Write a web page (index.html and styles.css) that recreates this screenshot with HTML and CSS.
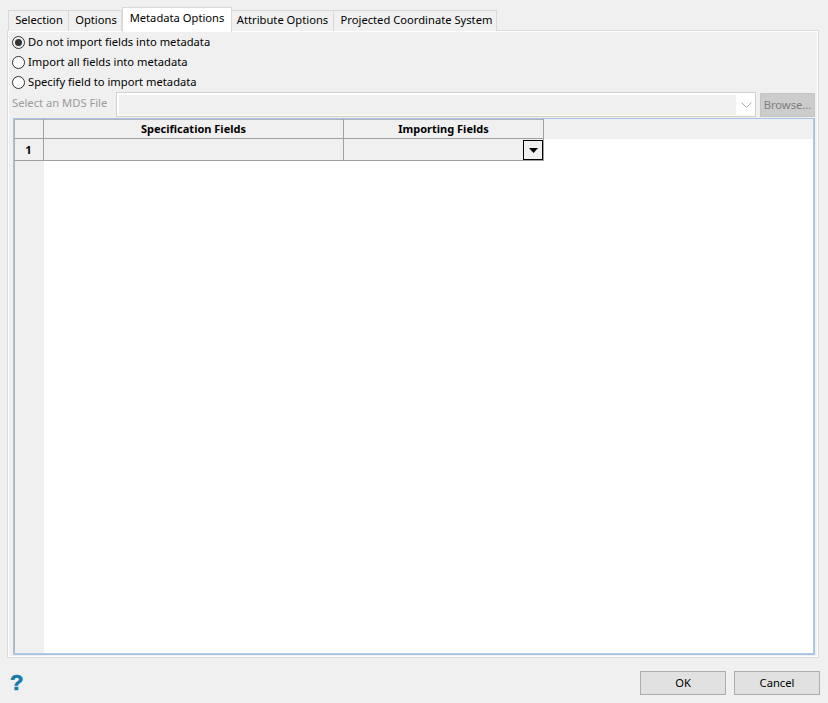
FILE: index.html
```html
<!DOCTYPE html>
<html lang="en">
<head>
<meta charset="utf-8">
<title>Metadata Options</title>
<link rel="stylesheet" href="styles.css">
</head>
<body>
<div class="dialog">
  <div class="tabs">
    <div class="tab tab-selection">Selection</div>
    <div class="tab tab-options">Options</div>
    <div class="tab tab-active">Metadata Options</div>
    <div class="tab tab-attribute">Attribute Options</div>
    <div class="tab tab-projected">Projected Coordinate System</div>
  </div>
  <div class="pane">
    <div class="radios">
      <label class="radio"><span class="dot dot-on"></span>Do not import fields into metadata</label>
      <label class="radio"><span class="dot"></span>Import all fields into metadata</label>
      <label class="radio"><span class="dot"></span>Specify field to import metadata</label>
    </div>
    <div class="file-row">
      <span class="file-label">Select an MDS File</span>
      <div class="combo">
        <div class="combo-field"></div>
        <svg class="chevron" width="11" height="6" viewBox="0 0 11 6"><path d="M0.5 0.5 L5.5 5.5 L10.5 0.5" fill="none" stroke="#a6a6a6" stroke-width="1"/></svg>
      </div>
      <div class="browse">Browse...</div>
    </div>
    <div class="table">
      <div class="side"></div>
      <div class="grid-wrap">
        <div class="grid">
          <div class="cell corner"></div>
          <div class="cell head">Specification Fields</div>
          <div class="cell head">Importing Fields</div>
          <div class="cell rownum">1</div>
          <div class="cell body"></div>
          <div class="cell body drop-cell">
            <span class="drop"><svg width="9" height="5" viewBox="0 0 9 5"><path d="M0 0 H9 L4.5 5 Z" fill="#000"/></svg></span>
          </div>
        </div>
      </div>
    </div>
  </div>
  <div class="footer">
    <span class="help">?</span>
    <div class="actions">
      <div class="btn">OK</div>
      <div class="btn">Cancel</div>
    </div>
  </div>
</div>
</body>
</html>
```
FILE: styles.css
```css
* { box-sizing: border-box; }
html, body { margin: 0; height: 100%; }
body {
  background: #f0f0f0;
  font: 11.2px/16px "Noto Sans", "Open Sans", sans-serif;
  color: #000;
  overflow: hidden;
}
.dialog { width: 828px; height: 703px; padding: 7px 8px 0 7px; display: flex; flex-direction: column; }
.tabs { display: flex; height: 24px; align-items: flex-end; padding-left: 1px; position: relative; z-index: 1; }
.tab {
  height: 21px;
  border: 1px solid #d9d9d9;
  border-bottom: 0;
  border-left: 0;
  text-align: center;
  line-height: 18px;
  white-space: nowrap;
  background: #f0f0f0;
}
.tab-selection { width: 61px; border-left: 1px solid #d9d9d9; padding-left: 1px; }
.tab-options { width: 53px; padding-left: 2px; }
.tab-active { width: 110px; background: #fff; border: 1px solid #d9d9d9; border-bottom: 0; line-height: 20px; margin-bottom: -1px; height: 25px; padding-bottom: 3px; }
.tab-attribute { width: 102px; }
.tab-projected { width: 163px; padding-left: 3px; }
.pane {
  height: 628px;
  width: 812px;
  margin-top: -1px;
  background: #f0f0f0;
  border: 1px solid #d9d9d9;
  box-shadow: inset 1px 1px 0 #fff, inset -1px -1px 0 #fff;
  padding: 1px 3px 0 4px;
  display: flex;
  flex-direction: column;
}
.radios { display: flex; flex-direction: column; }
.radio { height: 20px; display: flex; align-items: center; color: #000; }
.dot {
  width: 13px; height: 13px; border-radius: 50%;
  border: 1px solid #333; background: #fff;
  margin-right: 3px; flex: none;
  display: flex; align-items: center; justify-content: center;
}
.dot-on { background: #f0f0f0; }
.dot-on::after { content: ""; width: 7px; height: 7px; border-radius: 50%; background: #333; }
.file-row { display: flex; align-items: flex-start; height: 24px; }
.file-label { width: 104px; color: #9b9b9b; line-height: 22px; white-space: nowrap; }
.combo {
  width: 640px; height: 25px; border: 1px solid #d0d0d0;
  padding: 2px; display: flex; align-items: center;
  background: #fff;
}
.combo-field { width: 617px; height: 20px; background: #f0f0f0; }
.chevron { margin-left: 5px; }
.browse {
  width: 55px; height: 24px; margin: 1px 0 0 4px;
  background: #cccccc; border: 1px solid #c4c4c4;
  color: #7f7f7f; text-align: center; line-height: 21px;
}
.table {
  width: 802px; height: 537px; margin-top: 2px; margin-left: 1px;
  border: 1px solid #a3c2e4;
  background: #fff;
  display: flex;
  position: relative;
}
.table::after {
  content: ""; position: absolute; inset: 0; pointer-events: none;
  box-shadow: inset -1px -1px 0 #b5c9e0;
}
.side { position: absolute; left: 0; top: 0; bottom: 0; width: 30px; background: #f0f0f0; border-left: 1px solid #b4b4b4; }
.grid-wrap { width: 100%; height: 20px; background: #f0f0f0; position: relative; }
.grid {
  display: grid;
  grid-template-columns: 30px 300px 200px;
  grid-template-rows: 20px 22px;
  width: 530px;
  position: relative;
}
.cell { border-right: 1px solid #a0a0a0; border-bottom: 1px solid #a0a0a0; background: #f0f0f0; }
.corner { box-shadow: inset 1px 1px 0 #b4b4b4; }
.head { font-size: 11px; font-weight: 700; text-align: center; line-height: 20px; box-shadow: inset 0 1px 0 #b4b4b4; }
.rownum { font-weight: 700; text-align: center; line-height: 21px; box-shadow: inset 1px 0 0 #b4b4b4; }
.drop-cell { position: relative; }
.drop {
  position: absolute; right: 0; top: 1px; width: 20px; height: 20px;
  border: 1px solid #000; background: #f0f0f0;
  display: flex; align-items: center; justify-content: center;
}
.drop svg { display: block; }
.footer { flex: 1; display: flex; justify-content: space-between; align-items: flex-start; padding-top: 13px; }
.help { font: 700 22px/24px "Liberation Sans", sans-serif; color: #1279a8; padding-left: 3px; -webkit-text-stroke: 0.6px #1279a8; }
.actions { display: flex; gap: 8px; margin-right: 0; }
.btn {
  width: 86px; height: 24px; background: #e1e1e1; border: 1px solid #adadad;
  text-align: center; line-height: 22px;
}
```
